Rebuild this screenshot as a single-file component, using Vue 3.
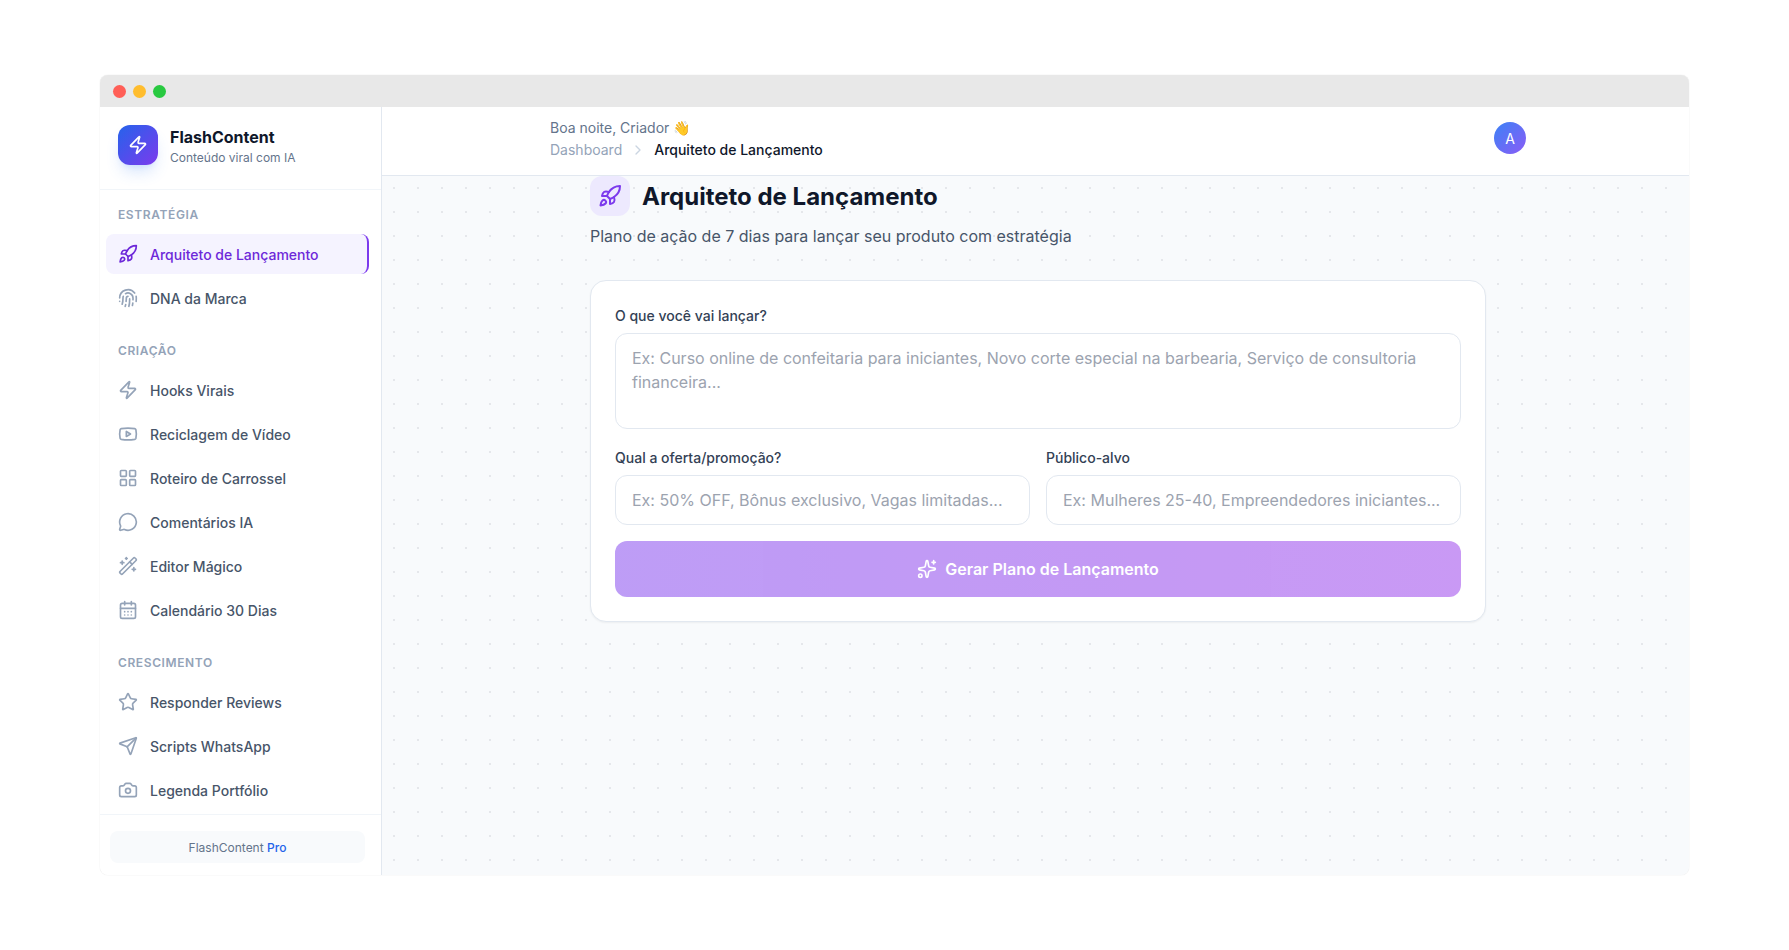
<template>
  <div class="page">
    <div class="window">
      <div class="titlebar">
        <span class="light red"></span>
        <span class="light yellow"></span>
        <span class="light green"></span>
      </div>

      <div class="viewport">
        <div class="app">
          <aside class="sidebar">
            <div class="brand">
              <div class="brand-logo">
                <svg class="icon" viewBox="0 0 24 24"><path :d="icons.zap[0]" /></svg>
              </div>
              <div>
                <div class="brand-name">FlashContent</div>
                <div class="brand-tagline">Conteúdo viral com IA</div>
              </div>
            </div>

            <nav class="nav">
              <section v-for="group in groups" :key="group.title">
                <h3 class="nav-title">{{ group.title }}</h3>
                <ul class="nav-list">
                  <li v-for="item in group.items" :key="item.label">
                    <a href="#" class="nav-link" :class="{ active: item.active }">
                      <svg class="icon" viewBox="0 0 24 24">
                        <path v-for="d in icons[item.icon]" :key="d" :d="d" />
                      </svg>
                      <span>{{ item.label }}</span>
                    </a>
                  </li>
                </ul>
              </section>
            </nav>

            <div class="sidebar-footer">
              <div class="plan">FlashContent <span class="plan-name">Pro</span></div>
            </div>
          </aside>

          <div class="main">
            <header class="topbar">
              <div class="topbar-inner">
                <div>
                  <p class="greeting">Boa noite, Criador 👋</p>
                  <nav class="breadcrumb">
                    <a href="#" class="crumb">Dashboard</a>
                    <svg class="icon chevron" viewBox="0 0 24 24"><path d="m9 18 6-6-6-6" /></svg>
                    <span class="crumb-current">Arquiteto de Lançamento</span>
                  </nav>
                </div>
                <button type="button" class="avatar">A</button>
              </div>
            </header>

            <main class="content">
              <div class="container">
                <div class="heading">
                  <div class="heading-icon">
                    <svg class="icon" viewBox="0 0 24 24">
                      <path v-for="d in icons.rocket" :key="d" :d="d" />
                    </svg>
                  </div>
                  <h1 class="heading-title">Arquiteto de Lançamento</h1>
                </div>
                <p class="subtitle">Plano de ação de 7 dias para lançar seu produto com estratégia</p>

                <form class="card" @submit.prevent>
                  <div class="field field-wide">
                    <label for="product">O que você vai lançar?</label>
                    <textarea
                      id="product"
                      v-model="form.product"
                      placeholder="Ex: Curso online de confeitaria para iniciantes, Novo corte especial na barbearia, Serviço de consultoria financeira..."
                    ></textarea>
                  </div>
                  <div class="field-row">
                    <div class="field">
                      <label for="offer">Qual a oferta/promoção?</label>
                      <input
                        id="offer"
                        v-model="form.offer"
                        type="text"
                        placeholder="Ex: 50% OFF, Bônus exclusivo, Vagas limitadas..."
                      />
                    </div>
                    <div class="field">
                      <label for="audience">Público-alvo</label>
                      <input
                        id="audience"
                        v-model="form.audience"
                        type="text"
                        placeholder="Ex: Mulheres 25-40, Empreendedores iniciantes..."
                      />
                    </div>
                  </div>
                  <button type="submit" class="submit" :disabled="!form.product">
                    <svg class="icon" viewBox="0 0 24 24">
                      <path v-for="d in icons.sparkles" :key="d" :d="d" />
                    </svg>
                    Gerar Plano de Lançamento
                  </button>
                </form>
              </div>
            </main>
          </div>
        </div>
      </div>
    </div>
  </div>
</template>

<script setup>
import { reactive } from "vue";

const form = reactive({ product: "", offer: "", audience: "" });

const groups = [
  {
    title: "Estratégia",
    items: [
      { label: "Arquiteto de Lançamento", icon: "rocket", active: true },
      { label: "DNA da Marca", icon: "fingerprint" },
    ],
  },
  {
    title: "Criação",
    items: [
      { label: "Hooks Virais", icon: "zap" },
      { label: "Reciclagem de Vídeo", icon: "video" },
      { label: "Roteiro de Carrossel", icon: "grid" },
      { label: "Comentários IA", icon: "message" },
      { label: "Editor Mágico", icon: "wand" },
      { label: "Calendário 30 Dias", icon: "calendar" },
    ],
  },
  {
    title: "Crescimento",
    items: [
      { label: "Responder Reviews", icon: "star" },
      { label: "Scripts WhatsApp", icon: "send" },
      { label: "Legenda Portfólio", icon: "camera" },
    ],
  },
];

// stroke paths on a 24x24 grid
const icons = {
  zap: [
    "M4 14a1 1 0 0 1-.78-1.63l9.9-10.2a.5.5 0 0 1 .86.46l-1.92 6.02A1 1 0 0 0 13 10h7a1 1 0 0 1 .78 1.63l-9.9 10.2a.5.5 0 0 1-.86-.46l1.92-6.02A1 1 0 0 0 11 14z",
  ],
  rocket: [
    "M4.5 16.5c-1.5 1.26-2 5-2 5s3.74-.5 5-2c.71-.84.7-2.13-.09-2.91a2.18 2.18 0 0 0-2.91-.09z",
    "m12 15-3-3a22 22 0 0 1 2-3.95A12.88 12.88 0 0 1 22 2c0 2.72-.78 7.5-6 11a22.35 22.35 0 0 1-4 2z",
    "M9 12H4s.55-3.03 2-4c1.62-1.08 5 0 5 0",
    "M12 15v5s3.03-.55 4-2c1.08-1.62 0-5 0-5",
  ],
  fingerprint: [
    "M12 10a2 2 0 0 0-2 2c0 1.02-.1 2.51-.26 4",
    "M14 13.12c0 2.38 0 6.38-1 8.88",
    "M17.29 21.02c.12-.6.43-2.3.5-3.02",
    "M2 12a10 10 0 0 1 18-6",
    "M2 16h.01",
    "M21.8 16c.2-2 .131-5.354 0-6",
    "M5 19.5C5.5 18 6 15 6 12a6 6 0 0 1 .34-2",
    "M8.65 22c.21-.66.45-1.32.57-2",
    "M9 6.8a6 6 0 0 1 9 5.2v2",
  ],
  video: [
    "M2.5 17a24.12 24.12 0 0 1 0-10 2 2 0 0 1 1.4-1.4 49.56 49.56 0 0 1 16.2 0A2 2 0 0 1 21.5 7a24.12 24.12 0 0 1 0 10 2 2 0 0 1-1.4 1.4 49.55 49.55 0 0 1-16.2 0A2 2 0 0 1 2.5 17",
    "m10 15 5-3-5-3z",
  ],
  grid: [
    "M4 3h5a1 1 0 0 1 1 1v5a1 1 0 0 1-1 1H4a1 1 0 0 1-1-1V4a1 1 0 0 1 1-1z",
    "M15 3h5a1 1 0 0 1 1 1v5a1 1 0 0 1-1 1h-5a1 1 0 0 1-1-1V4a1 1 0 0 1 1-1z",
    "M15 14h5a1 1 0 0 1 1 1v5a1 1 0 0 1-1 1h-5a1 1 0 0 1-1-1v-5a1 1 0 0 1 1-1z",
    "M4 14h5a1 1 0 0 1 1 1v5a1 1 0 0 1-1 1H4a1 1 0 0 1-1-1v-5a1 1 0 0 1 1-1z",
  ],
  message: [
    "M2.992 16.342a2 2 0 0 1 .094 1.167l-1.065 3.29a1 1 0 0 0 1.236 1.168l3.413-.998a2 2 0 0 1 1.099.092 10 10 0 1 0-4.777-4.719",
  ],
  wand: [
    "m21.64 3.64-1.28-1.28a1.21 1.21 0 0 0-1.72 0L2.36 18.64a1.21 1.21 0 0 0 0 1.72l1.28 1.28a1.2 1.2 0 0 0 1.72 0L21.64 5.36a1.2 1.2 0 0 0 0-1.72",
    "m14 7 3 3",
    "M5 6v4",
    "M19 14v4",
    "M10 2v2",
    "M7 8H3",
    "M21 16h-4",
    "M11 3H9",
  ],
  calendar: [
    "M8 2v4",
    "M16 2v4",
    "M5 4h14a2 2 0 0 1 2 2v14a2 2 0 0 1-2 2H5a2 2 0 0 1-2-2V6a2 2 0 0 1 2-2z",
    "M3 10h18",
    "M8 14h.01",
    "M12 14h.01",
    "M16 14h.01",
    "M8 18h.01",
    "M12 18h.01",
    "M16 18h.01",
  ],
  star: [
    "M11.525 2.295a.53.53 0 0 1 .95 0l2.31 4.679a2.123 2.123 0 0 0 1.595 1.16l5.166.756a.53.53 0 0 1 .294.904l-3.736 3.638a2.123 2.123 0 0 0-.611 1.878l.882 5.14a.53.53 0 0 1-.771.56l-4.618-2.428a2.122 2.122 0 0 0-1.973 0L6.396 21.01a.53.53 0 0 1-.77-.56l.881-5.139a2.122 2.122 0 0 0-.611-1.879L2.16 9.795a.53.53 0 0 1 .294-.906l5.165-.755a2.122 2.122 0 0 0 1.597-1.16z",
  ],
  send: [
    "M14.536 21.686a.5.5 0 0 0 .937-.024l6.5-19a.496.496 0 0 0-.635-.635l-19 6.5a.5.5 0 0 0-.024.937l7.93 3.18a2 2 0 0 1 1.112 1.11z",
    "m21.854 2.147-10.94 10.939",
  ],
  camera: [
    "M13.997 4a2 2 0 0 1 1.76 1.05l.486.9A2 2 0 0 0 18.003 7H20a2 2 0 0 1 2 2v9a2 2 0 0 1-2 2H4a2 2 0 0 1-2-2V9a2 2 0 0 1 2-2h1.997a2 2 0 0 0 1.759-1.048l.489-.904A2 2 0 0 1 10.004 4z",
    "M15 13a3 3 0 1 1-6 0 3 3 0 0 1 6 0z",
  ],
  sparkles: [
    "M11.017 2.814a1 1 0 0 1 1.966 0l1.051 5.558a2 2 0 0 0 1.594 1.594l5.558 1.051a1 1 0 0 1 0 1.966l-5.558 1.051a2 2 0 0 0-1.594 1.594l-1.051 5.558a1 1 0 0 1-1.966 0l-1.051-5.558a2 2 0 0 0-1.594-1.594l-5.558-1.051a1 1 0 0 1 0-1.966l5.558-1.051a2 2 0 0 0 1.594-1.594z",
    "M20 2v4",
    "M22 4h-4",
    "M6 20a2 2 0 1 1-4 0 2 2 0 0 1 4 0z",
  ],
};
</script>

<style>
body {
  background: #fff;
}
</style>

<style scoped>
.page {
  box-sizing: border-box;
  display: flex;
  min-height: 100vh;
  padding: 75px 100px;
  font-family: Inter, "Liberation Sans", sans-serif;
  font-size: 14px;
  line-height: 20px;
  color: #0f172a;
}

.page * {
  box-sizing: border-box;
}

.window {
  display: flex;
  flex-direction: column;
  flex: 1;
  min-width: 0;
  border-radius: 8px;
  overflow: hidden;
  background: #fff;
  box-shadow: 0 0 1px rgba(0, 0, 0, 0.2);
}

/* Window chrome */
.titlebar {
  display: flex;
  align-items: center;
  gap: 7px;
  height: 32px;
  padding: 0 13px;
  background: #e8e8e8;
}

.light {
  width: 13px;
  height: 13px;
  border-radius: 50%;
}

.red {
  background: #ff5f57;
}

.yellow {
  background: #ffbd2e;
}

.green {
  background: #28c940;
}

.viewport {
  display: flex;
  flex: 1;
  overflow: hidden;
}

/* The app bleeds slightly past the window edges */
.app {
  display: flex;
  flex: 1;
  min-width: 0;
  margin: -6px -5px -4px -6px;
}

.icon {
  flex-shrink: 0;
  width: 20px;
  height: 20px;
  fill: none;
  stroke: currentColor;
  stroke-width: 2;
  stroke-linecap: round;
  stroke-linejoin: round;
}

/* Sidebar */
.sidebar {
  display: flex;
  flex-direction: column;
  flex-shrink: 0;
  width: 288px;
  border-right: 1px solid #e2e8f0;
  background: #fff;
}

.brand {
  display: flex;
  align-items: flex-start;
  gap: 12px;
  padding: 24px 24px 22px;
  border-bottom: 1px solid #f1f5f9;
}

.brand-logo {
  display: flex;
  align-items: center;
  justify-content: center;
  width: 40px;
  height: 40px;
  border-radius: 12px;
  color: #fff;
  background: linear-gradient(135deg, #2563eb, #7c3aed);
  box-shadow: 0 10px 15px -3px rgba(59, 130, 246, 0.2), 0 4px 6px -4px rgba(59, 130, 246, 0.2);
}

.brand-name {
  font-size: 16px;
  line-height: 24px;
  font-weight: 700;
}

.brand-tagline {
  font-size: 12px;
  line-height: 18px;
  color: #64748b;
}

.nav {
  display: flex;
  flex-direction: column;
  flex: 1;
  gap: 24px;
  padding: 16px 12px 4px;
}

.nav-title {
  margin: 0 0 10px;
  padding: 0 12px;
  font-size: 12px;
  line-height: 18px;
  font-weight: 600;
  letter-spacing: 0.05em;
  text-transform: uppercase;
  color: #94a3b8;
}

.nav-list {
  display: flex;
  flex-direction: column;
  gap: 4px;
  margin: 0;
  padding: 0;
  list-style: none;
}

.nav-link {
  display: flex;
  align-items: flex-start;
  gap: 12px;
  padding: 10px 12px 8px;
  border-radius: 8px;
  line-height: 22px;
  font-weight: 500;
  text-decoration: none;
  color: #475569;
}

.nav-link .icon {
  color: #94a3b8;
}

.nav-link.active {
  border-right: 2px solid #7c3aed;
  color: #6d28d9;
  background: #f5f3ff;
}

.nav-link.active .icon {
  color: #6d28d9;
}

.sidebar-footer {
  padding: 16px;
  border-top: 1px solid #f1f5f9;
}

.plan {
  padding: 8px 8px 6px;
  border-radius: 8px;
  font-size: 12px;
  line-height: 18px;
  text-align: center;
  color: #64748b;
  background: #f8fafc;
}

.plan-name {
  font-weight: 500;
  color: #2563eb;
}

/* Main area */
.main {
  display: flex;
  flex-direction: column;
  flex: 1;
  min-width: 0;
}

.topbar {
  padding: 15px 0;
  border-bottom: 1px solid #e2e8f0;
  background: #fff;
}

.topbar-inner {
  display: flex;
  align-items: center;
  justify-content: space-between;
  max-width: 1024px;
  margin: 0 auto;
  padding: 0 24px;
}

.greeting {
  margin: 0;
  line-height: 24px;
  color: #64748b;
}

.breadcrumb {
  display: flex;
  align-items: center;
  gap: 8px;
}

.crumb {
  text-decoration: none;
  color: #94a3b8;
}

.chevron {
  width: 16px;
  height: 16px;
  color: #cbd5e1;
}

.crumb-current {
  font-weight: 500;
}

.avatar {
  width: 32px;
  height: 32px;
  padding: 2px 0 0;
  border: 0;
  border-radius: 50%;
  font: inherit;
  color: #fff;
  background: linear-gradient(135deg, #3b82f6, #8b5cf6);
}

.content {
  flex: 1;
  background: #f8fafc radial-gradient(circle, #e5e7eb 1px, transparent 1px) 0 0 / 24px 24px;
}

.container {
  max-width: 896px;
  margin: 0 auto;
}

.heading {
  display: flex;
  align-items: flex-start;
  gap: 12px;
}

.heading-icon {
  display: flex;
  align-items: center;
  justify-content: center;
  width: 40px;
  height: 40px;
  border-radius: 12px;
  color: #7c3aed;
  background: #ede9fe;
}

.heading-icon .icon {
  width: 24px;
  height: 24px;
}

.heading-title {
  margin: 0;
  font-size: 24px;
  line-height: 42px;
  font-weight: 700;
}

.subtitle {
  margin: 6px 0 32px;
  font-size: 16px;
  line-height: 24px;
  color: #475569;
}

/* Form */
.card {
  padding: 24px;
  border: 1px solid #e2e8f0;
  border-radius: 16px;
  background: #fff;
  box-shadow: 0 1px 2px rgba(0, 0, 0, 0.05);
}

.field {
  display: flex;
  flex-direction: column;
  gap: 6px;
}

.field-wide {
  margin-bottom: 18px;
}

.field-row {
  display: grid;
  grid-template-columns: 1fr 1fr;
  gap: 16px;
  margin-bottom: 16px;
}

label {
  line-height: 22px;
  font-weight: 500;
  color: #334155;
}

textarea,
input {
  display: block;
  width: 100%;
  margin: 0;
  padding: 12px 16px;
  border: 1px solid #e2e8f0;
  border-radius: 12px;
  outline: none;
  font: inherit;
  font-size: 16px;
  line-height: 24px;
  color: #0f172a;
  background: #fff;
}

textarea {
  height: 96px;
  resize: none;
}

input {
  height: 50px;
}

textarea::placeholder,
input::placeholder {
  color: #9ca3af;
}

.submit {
  display: flex;
  align-items: center;
  justify-content: center;
  gap: 8px;
  width: 100%;
  height: 56px;
  border: 0;
  border-radius: 12px;
  font: inherit;
  font-size: 16px;
  line-height: 24px;
  font-weight: 600;
  color: #fff;
  background: linear-gradient(90deg, #7c3aed, #9333ea);
}

.submit:disabled {
  opacity: 0.5;
}
</style>
